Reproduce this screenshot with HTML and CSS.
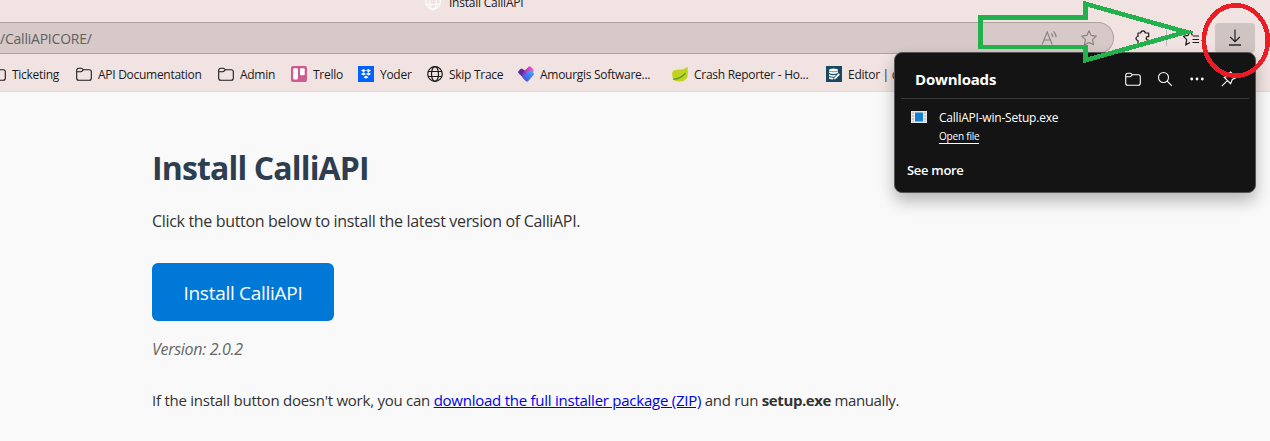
FILE: index.html
```html
<!DOCTYPE html>
<html lang="en">
<head>
<meta charset="utf-8">
<title>Install CalliAPI</title>
<link rel="stylesheet" href="styles.css">
</head>
<body>
<svg class="defs" width="0" height="0" aria-hidden="true">
  <symbol id="folder" viewBox="0 0 16 16"><path d="M.7 4.200a2 2 0 0 1 2-2h2.500q.8 0 1.300.6l.9 1h5.900a2 2 0 0 1 2 2v6.500a2 2 0 0 1-2 2H2.700a2 2 0 0 1-2-2zM.7 5.700h4.200q.7 0 1.100-.5l1.400-1.400" fill="none" stroke="currentColor" stroke-width="1.100"/></symbol>
  <symbol id="globe" viewBox="0 0 16 16"><g fill="none" stroke="currentColor" stroke-width="1.200"><circle cx="8" cy="8" r="7.300"/><ellipse cx="8" cy="8" rx="3.500" ry="7.300"/><path d="M1.200 5.500h13.600M1.200 10.500h13.600"/></g></symbol>
</svg>
<header class="chrome">
  <div class="tabs"><svg class="ico tab-globe"><use href="#globe"/></svg><span class="tab-title">Install CalliAPI</span></div>
  <div class="toolbar">
    <div class="address">
      <span class="url">/CalliAPICORE/</span>
      <svg class="ico" viewBox="0 0 16 16"><path d="M1.200 14.500 6.200 2l5 12.500M2.900 10h6.600M10.300 3.500q1.600 1.400 1.500 3.500M12.300 1.300q3 2.600 2.800 6" fill="none" stroke="currentColor" stroke-width="1.100"/></svg>
      <svg class="ico star" viewBox="0 0 16 16"><path d="m8 .8 2.200 4.600 5.100.7-3.700 3.600.9 5.100L8 12.400l-4.500 2.400.9-5.100L.7 6.100l5.100-.7z" fill="none" stroke="currentColor" stroke-width="1.100" stroke-linejoin="round"/></svg>
    </div>
    <svg class="ico puzzle" viewBox="0 0 16 16"><path d="M3 3h2.800a2.200 2.200 0 0 1 4.400 0h3.500v3.700h-.8a1.700 1.700 0 0 0 0 3.400h.8V14H10a2 2 0 0 0-3.800 0H3v-3.500a2 2 0 1 1 0-4z" fill="none" stroke="currentColor" stroke-width="1.200" stroke-linejoin="round"/></svg>
    <i class="divider"></i>
    <svg class="ico favs" viewBox="0 0 16 16"><path d="M9.500 5.500 7.200.9 5 5.400.2 6.200l3.500 3.500-.9 5.100 4.200-2.300M10 6h6M9.500 9.500H16M9.500 12.500H16" fill="none" stroke="currentColor" stroke-width="1.200"/></svg>
    <div class="dl-button"><svg width="14" height="18" viewBox="0 0 14 18"><path d="M7 .5v12M2.200 8 7 12.700 11.800 8" fill="none" stroke="#222" stroke-width="1.200"/><path d="M1 16h12" stroke="#111" stroke-width="1.300"/></svg></div>
  </div>
  <nav class="bookmarks">
    <a><svg class="ico"><use href="#folder"/></svg><span>Ticketing</span></a>
    <a><svg class="ico"><use href="#folder"/></svg><span>API Documentation</span></a>
    <a><svg class="ico"><use href="#folder"/></svg><span>Admin</span></a>
    <a><svg class="ico" viewBox="0 0 16 16"><rect width="16" height="16" rx="2" fill="#cf5b90"/><rect x="2.200" y="2.200" width="4.700" height="11.300" rx="1" fill="#fff"/><rect x="9" y="2.200" width="4.700" height="7" rx="1" fill="#fff"/></svg><span>Trello</span></a>
    <a><svg class="ico" viewBox="0 0 16 16"><path fill="#0061fe" d="M0 0h16v16H0z"/><path fill="#fff" d="m5.500 3 2.500 1.600-2.500 1.600L3 4.600zM10.500 3 13 4.600l-2.500 1.600L8 4.600zM5.500 6.300 8 7.900 5.500 9.500 3 7.900zM10.500 6.300 13 7.900l-2.500 1.600L8 7.900zM8 9.600l2.500 1.600L8 12.800l-2.500-1.600z"/></svg><span>Yoder</span></a>
    <a><svg class="ico"><use href="#globe"/></svg><span>Skip Trace</span></a>
    <a><svg class="ico" viewBox="0 0 16 16"><defs><linearGradient id="hg" x1="0" y1="1" x2="1" y2="0"><stop stop-color="#5a35d8"/><stop offset=".5" stop-color="#3f7bf0"/><stop offset="1" stop-color="#36b5fb"/></linearGradient><linearGradient id="pg"><stop stop-color="#5b2c9c"/><stop offset=".6" stop-color="#d83cd0"/><stop offset="1" stop-color="#ef65d5"/></linearGradient></defs><path fill="#5b2c9c" d="M.4 5.200 2.500 3q1-.8 2 0L7.500 5 4 10.500.4 7q-.8-.9 0-1.800z"/><path fill="url(#pg)" d="M2.500 9 10.600.7q1.100-1 2.200 0L15 2.900q.9 1 .5 3.600L12 5 5.500 11.500z"/><path fill="url(#hg)" d="M4.300 10.300 10.800 4.800q1-.6 2 0L15.600 7q.7 1 0 2L10 15.300q-1 .9-2 0l-3.500-3.600q-.6-.7-.2-1.400z"/></svg><span>Amourgis Software...</span></a>
    <a><svg class="ico" viewBox="0 0 16 16"><path fill="#c1d41b" d="M.2 8Q0 4 4.500 3.700 12 4.300 15.500.6q1 7-.3 10.800-1.800 3.900-8 4Q3 15.400 1 13.500.3 10 .2 8z"/><path fill="none" stroke="#5e9d2d" stroke-width="1.400" d="M1.300 13.300Q9 13 13.500 7"/></svg><span>Crash Reporter - Ho...</span></a>
    <a><svg class="ico" viewBox="0 0 16 16"><path fill="#174a60" d="M0 0h16v16H0z"/><g fill="#fff"><ellipse cx="7.500" cy="4" rx="4.500" ry="1.600"/><path d="M3 5.300q4.500 2 9 0v1.800q-4.500 2-9 0zM3 8.200q4 1.700 7 .6L8.400 10.700Q5 11 3 10zM3 11q2 .9 4.800.7L7 13.500q-3-.1-4-1z"/><path d="m8 13.500.6-2 4-4.300 1.300 1.200-4 4.300z"/></g></svg><span>Editor | d</span></a>
  </nav>
</header>
<main class="page">
  <h1><span>Install CalliAPI</span></h1>
  <p class="lead"><span>Click the button below to install the latest version of CalliAPI.</span></p>
  <a class="install"><span>Install CalliAPI</span></a>
  <p class="version"><span>Version: 2.0.2</span></p>
  <p class="note"><span>If the install button doesn't work, you can </span><a>download the full installer package (ZIP)</a><span> and run </span><b>setup.exe</b><span class="tail"> manually.</span></p>
</main>
<section class="popup">
  <div class="popup-head">
    <h2>Downloads</h2>
    <svg class="ico"><use href="#folder"/></svg>
    <svg class="ico" viewBox="0 0 16 16"><circle cx="6.500" cy="6.500" r="5" fill="none" stroke="currentColor" stroke-width="1.100"/><path d="m10.200 10.200 4.600 4.600" stroke="currentColor" stroke-width="1.100"/></svg>
    <svg class="ico" viewBox="0 0 16 16"><g fill="currentColor"><circle cx="2.700" cy="8" r="1.400"/><circle cx="8" cy="8" r="1.400"/><circle cx="13.300" cy="8" r="1.400"/></g></svg>
    <svg class="ico" viewBox="0 0 16 16"><path d="m9.500 1 5.500 5.500-1 .8-2.700 1.200-1.700 4.200-6.300-6.300 4.200-1.700L8.700 2zM6.300 9.700.8 15.200" fill="none" stroke="currentColor" stroke-width="1.100"/></svg>
  </div>
  <div class="item">
    <svg width="16" height="12" viewBox="0 0 16 12"><path fill="#e8e8e8" d="M0 0h16v12H0z"/><path d="M2 1v10M14 1v10" stroke="#aaa" stroke-dasharray="2 1"/><path fill="#1580d2" d="M4 1.500h8v9H4z"/></svg>
    <div class="file"><span class="name">CalliAPI-win-Setup.exe</span><span class="open">Open file</span></div>
  </div>
  <div class="more"><span>See more</span></div>
</section>
<svg class="marks" width="1270" height="110" viewBox="0 0 1270 110" shape-rendering="crispEdges"><path d="M980.500 17.200H1085.300V3.800L1186 32 1085.300 60.300V46.800H980.500z" fill="none" stroke="#22b14c" stroke-width="4.600"/><ellipse cx="1235.800" cy="40.500" rx="32" ry="35.200" fill="none" stroke="#ed1c24" stroke-width="4.600"/></svg>
</body>
</html>
```
FILE: styles.css
```css
* { box-sizing: border-box; }
body { margin: 0; width: 1270px; height: 441px; overflow: hidden; position: relative; background: #f9f9f9; color: #333; font-family: "Open Sans", "Noto Sans", sans-serif; }
.defs { position: absolute; }
.ico { width: 16px; height: 16px; flex: none; }
.chrome { height: 92px; background: #f0e3e1; border-bottom: 1px solid #e6d8d6; color: #1b1b1b; }
.tabs { height: 22px; display: flex; gap: 8px; padding-left: 425px; font-size: 12px; letter-spacing: -.23px; line-height: 16px; }
.tabs > * { margin-top: -6px; }
.tabs .tab-title { margin-top: -5px; }
.tab-globe { color: #fff; }
.toolbar { height: 32px; display: flex; align-items: center; }
.address { width: 1114px; height: 32px; display: flex; align-items: center; border: 1px solid #aea2a1; border-left: 0; border-radius: 0 16px 16px 0; background: #d6c9c7; color: #8a8180; }
.url { flex: 1; font-size: 14px; letter-spacing: -.22px; color: #626060; }
.star { margin: 0 16px 0 24px; }
.puzzle { margin-left: 21px; }
.divider { width: 1px; height: 16px; background: #bbb; margin: 0 16px 0 15px; }
.dl-button { margin-left: 16px; width: 40px; height: 30px; border-radius: 4px; background: #d0c4c3; display: flex; align-items: center; justify-content: center; }
.bookmarks { margin-left: -10px; height: 38px; display: grid; grid-template-columns: 86px 142px 73px 67px 69px 91px 154px 154px 90px; align-items: center; font-size: 12px; letter-spacing: -.28px; white-space: nowrap; }
.bookmarks a { display: flex; align-items: center; gap: 6px; margin-top: 2px; }
.page { padding: 49px 152px 0; }
h1 { margin: 0; font-size: 32px; line-height: 54px; letter-spacing: -.85px; color: #2c3e50; }
p { margin: 0; }
.lead { margin-top: 13px; font-size: 16px; line-height: 26px; letter-spacing: -.33px; }
.install { margin-top: 29px; width: 182px; height: 58px; padding-top: 1px; border-radius: 6px; background: #0078d7; color: #fff; display: flex; align-items: center; justify-content: center; font-size: 19px; letter-spacing: -.28px; }
.version { margin-top: 15px; font-size: 16px; line-height: 26px; letter-spacing: -.3px; font-style: italic; color: #666; }
.note { margin-top: 25px; font-size: 15px; line-height: 26px; letter-spacing: -.25px; white-space: pre; }
.note a { color: #00e; text-decoration: underline; }
.note b { letter-spacing: -.4px; }
.note .tail { letter-spacing: -.4px; }
.popup { position: absolute; left: 894px; top: 52px; width: 362px; height: 141px; border: 1px solid #555; border-radius: 8px; background: #141414; color: #fff; box-shadow: 0 8px 16px rgba(0,0,0,.27); }
.popup-head { margin: 0 6px; height: 46px; padding: 7px 12px 0 14px; border-bottom: 1px solid #393939; display: flex; align-items: center; gap: 16px; }
.popup-head h2 { flex: 1; margin: 0; font-size: 15px; font-weight: 700; letter-spacing: -.2px; }
.item { display: flex; gap: 12px; padding: 12px 0 0 16px; }
.file { display: flex; flex-direction: column; align-items: flex-start; margin-top: -1px; }
.name { font-size: 12px; line-height: 16px; letter-spacing: -.22px; }
.open { margin-top: 4px; font-size: 10px; line-height: 13px; letter-spacing: -.2px; border-bottom: 1px solid #fff; }
.more { margin: 16px 0 0 12px; font-size: 13px; font-weight: 600; letter-spacing: -.3px; line-height: 20px; }
.marks { position: absolute; left: 0; top: 0; }
```
